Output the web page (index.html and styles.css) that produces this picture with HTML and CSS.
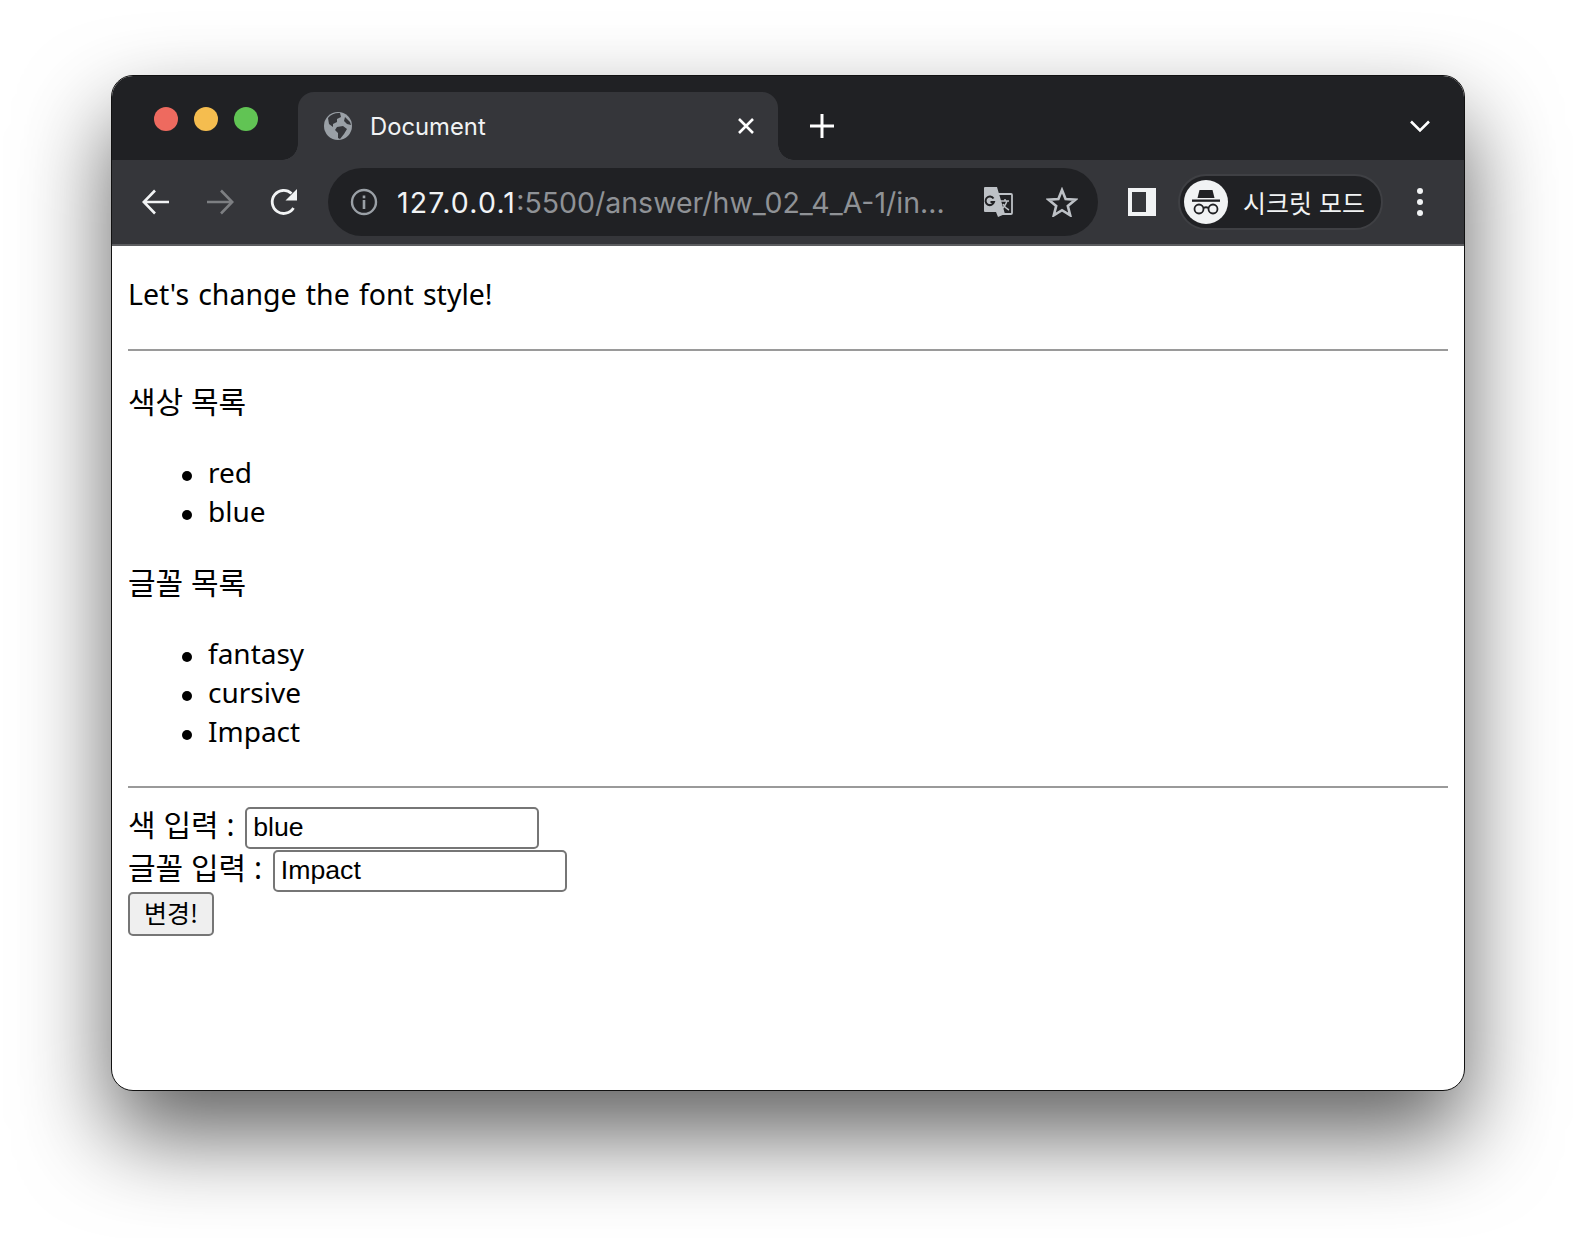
FILE: index.html
```html
<!DOCTYPE html>
<html lang="ko">
  <head>
    <meta charset="utf-8" />
    <title>Document</title>
    <link rel="stylesheet" href="styles.css">
  </head>
  <body>
    <div class="window">
      <div class="tabstrip">
        <div class="lights">
          <span class="light red"></span>
          <span class="light yellow"></span>
          <span class="light green"></span>
        </div>
        <div class="tab">
          <svg class="globe" width="30" height="30" viewBox="0 0 30 30">
            <circle cx="15" cy="15" r="14" fill="#9aa0a6" />
            <path d="M5 7 C8 3 13 1.500 17 2 L18 6 L14 8 L14 11 L10 13 L10 16 L6 13 Z" fill="#35363a" />
            <path d="M14 16 L20 15 L24 18 L21 23 L17 28 L15 27 L15 22 L12 19 Z" fill="#35363a" />
            <path d="M22 6 L27 11 L28 14 L24 13 L21 10 Z" fill="#35363a" />
          </svg>
          <span class="tab-title">Document</span>
          <svg class="tab-close" width="20" height="20" viewBox="0 0 20 20">
            <path d="M3 3 L17 17 M17 3 L3 17" stroke="#fff" stroke-width="2.600" />
          </svg>
        </div>
        <svg class="new-tab" width="26" height="26" viewBox="0 0 26 26">
          <path d="M13 1 V25 M1 13 H25" stroke="#fff" stroke-width="3" />
        </svg>
        <svg class="tab-search" width="22" height="14" viewBox="0 0 22 14">
          <path d="M2 2.500 L11 11.500 L20 2.500" fill="none" stroke="#fff" stroke-width="2.600" />
        </svg>
      </div>
      <div class="toolbar">
        <svg class="nav back" width="28" height="28" viewBox="0 0 28 28">
          <path d="M27 14 H2 M13 2.500 L1.800 14 L13 25.500" fill="none" stroke="#f1f3f4" stroke-width="2.600" />
        </svg>
        <svg class="nav forward" width="28" height="28" viewBox="0 0 28 28">
          <path d="M1 14 H26 M15 2.500 L26.200 14 L15 25.500" fill="none" stroke="#7d7f82" stroke-width="2.600" />
        </svg>
        <svg class="nav reload" width="28" height="28" viewBox="0 0 28 28">
          <path d="M23.500 20 A11.500 11.500 0 1 1 21.500 5.500" fill="none" stroke="#f1f3f4" stroke-width="2.800" />
          <path d="M27 1 V12.500 H15.500 Z" fill="#f1f3f4" />
        </svg>
        <div class="omnibox">
          <svg class="info" width="28" height="28" viewBox="0 0 28 28">
            <circle cx="14" cy="14" r="12" fill="none" stroke="#9aa0a6" stroke-width="2.400" />
            <rect x="12.700" y="12" width="2.600" height="9" fill="#9aa0a6" />
            <rect x="12.700" y="7.500" width="2.600" height="2.800" fill="#9aa0a6" />
          </svg>
          <span class="url"><span class="host">127.0.0.1</span>:5500/answer/hw_02_4_A-1/in...</span>
          <svg class="translate" width="30" height="32" viewBox="0 0 30 32">
            <path d="M1 2 Q1 1 2 1 H14 L22 28 L15 31 L13 26 H2 Q1 26 1 25 Z" fill="#bdc1c6" />
            <path d="M13 8 H28 Q29 8 29 9 V27 Q29 28 28 28 H17 Z" fill="none" stroke="#bdc1c6" stroke-width="1.800" />
            <path d="M10.500 12.500 A4.300 4.300 0 1 0 11 16 H7.500" fill="none" stroke="#202124" stroke-width="2" />
            <path d="M18 15 H26 M22 13 V15 M24 15 Q22 21 17.500 24 M20 18 Q22 22 26 24" fill="none" stroke="#bdc1c6" stroke-width="1.500" />
          </svg>
          <svg class="star" width="32" height="30" viewBox="0 0 32 30">
            <path d="M16 3 L19.600 12 L29.300 12.700 L21.800 18.900 L24.200 28.300 L16 23.200 L7.800 28.300 L10.200 18.900 L2.700 12.700 L12.400 12 Z" fill="none" stroke="#bdc1c6" stroke-width="2.600" />
          </svg>
        </div>
        <svg class="side-panel" width="28" height="28" viewBox="0 0 28 28">
          <path d="M0 0 H28 V28 H0 Z M4 4 V24 H18 V4 Z" fill="#f1f3f4" fill-rule="evenodd" />
        </svg>
        <div class="profile">
          <svg class="avatar" width="44" height="44" viewBox="0 0 44 44">
            <circle cx="22" cy="22" r="22" fill="#f1f3f4" />
            <path d="M15.500 10 H28.500 L30.500 18 H13.500 Z" fill="#202124" />
            <rect x="8" y="19.500" width="28" height="2.300" fill="#202124" />
            <circle cx="15" cy="29" r="4.500" fill="none" stroke="#202124" stroke-width="1.800" />
            <circle cx="29" cy="29" r="4.500" fill="none" stroke="#202124" stroke-width="1.800" />
            <path d="M19.500 28 Q22 26.500 24.500 28" fill="none" stroke="#202124" stroke-width="1.800" />
          </svg>
          <span class="profile-name">시크릿 모드</span>
        </div>
        <div class="menu-dots">
          <span></span>
          <span></span>
          <span></span>
        </div>
      </div>
      <div class="page">
        <p class="intro">Let's change the font style!</p>
        <hr />
        <p>색상 목록</p>
        <ul class="latin">
          <li>red</li>
          <li>blue</li>
        </ul>
        <p>글꼴 목록</p>
        <ul class="latin">
          <li>fantasy</li>
          <li>cursive</li>
          <li>Impact</li>
        </ul>
        <hr />
        <form>
          <label>색 입력 : <input type="text" value="blue" /></label>
          <label>글꼴 입력 : <input type="text" value="Impact" /></label>
          <button type="button">변경!</button>
        </form>
      </div>
    </div>
  </body>
</html>
```

FILE: styles.css
```css
html,
body {
  margin: 0;
  padding: 0;
  background-color: #fff;
}
body {
  width: 1576px;
  height: 1238px;
  overflow: hidden;
  padding: 75px 0 0 111px;
  box-sizing: border-box;
}
.window {
  width: 1354px;
  height: 1016px;
  box-sizing: border-box;
  border-radius: 22px;
  background-color: #fff;
  border: 1.500px solid #111;
  box-shadow: 0 44px 90px rgba(0, 0, 0, 0.62);
  overflow: hidden;
  display: flex;
  flex-direction: column;
}

/* tab strip */
.tabstrip {
  height: 84px;
  flex-shrink: 0;
  background-color: #202124;
  display: flex;
  align-items: flex-end;
}
.lights {
  width: 186px;
  height: 68px;
  padding-left: 42px;
  box-sizing: border-box;
  display: flex;
  gap: 16px;
  padding-top: 15px;
}
.light {
  width: 24px;
  height: 24px;
  border-radius: 50%;
}
.red {
  background-color: #ee6a5f;
}
.yellow {
  background-color: #f5bd4f;
}
.green {
  background-color: #61c454;
}
.tab {
  position: relative;
  width: 480px;
  height: 68px;
  background-color: #35363a;
  border-radius: 16px 16px 0 0;
  display: flex;
  align-items: center;
  padding: 0 22px 0 25px;
  box-sizing: border-box;
}
.tab::before,
.tab::after {
  content: "";
  position: absolute;
  bottom: 0;
  width: 16px;
  height: 16px;
}
.tab::before {
  left: -16px;
  background: radial-gradient(circle at 0 0, #202124 15.500px, #35363a 16px);
}
.tab::after {
  right: -16px;
  background: radial-gradient(circle at 100% 0, #202124 15.500px, #35363a 16px);
}
.globe {
  flex-shrink: 0;
}
.tab-title {
  margin-left: 17px;
  flex-grow: 1;
  font-family: Inter, "Liberation Sans", sans-serif;
  font-size: 23.800px;
  color: #f1f3f4;
}
.new-tab {
  margin: 0 0 21px 31px;
}
.tab-search {
  margin: 0 33px 27px auto;
}

/* toolbar */
.toolbar {
  height: 86px;
  flex-shrink: 0;
  background-color: #35363a;
  border-bottom: 2px solid #5c5d60;
  box-sizing: border-box;
  display: flex;
  align-items: center;
}
.nav {
  flex-shrink: 0;
}
.back {
  margin-left: 30px;
}
.forward {
  margin-left: 36px;
}
.reload {
  margin-left: 36px;
}
.omnibox {
  width: 770px;
  height: 68px;
  margin-left: 30px;
  box-sizing: border-box;
  background-color: #202124;
  border-radius: 34px;
  display: flex;
  align-items: center;
  padding: 0 20px 0 22px;
  flex-shrink: 0;
}
.url {
  margin-left: 19px;
  flex-grow: 1;
  font-family: Inter, "Liberation Sans", sans-serif;
  font-size: 28.500px;
  color: #8f9296;
  white-space: nowrap;
}
.host {
  color: #f1f3f4;
  letter-spacing: 1.200px;
}
.star {
  margin-left: 33px;
}
.side-panel {
  margin-left: 30px;
  flex-shrink: 0;
}
.profile {
  width: 205px;
  height: 56px;
  margin-left: 22px;
  box-sizing: border-box;
  background-color: #202124;
  border: 2px solid #3f4044;
  border-radius: 28px;
  display: flex;
  align-items: center;
  padding-left: 4px;
  flex-shrink: 0;
}
.profile-name {
  margin-left: 15px;
  font-family: "Noto Sans CJK KR", sans-serif;
  font-size: 25px;
  color: #f1f3f4;
  white-space: nowrap;
}
.menu-dots {
  margin-left: 34px;
  display: flex;
  flex-direction: column;
  gap: 5px;
}
.menu-dots span {
  width: 6px;
  height: 6px;
  border-radius: 50%;
  background-color: #f1f3f4;
}

/* page content */
.page {
  flex-grow: 1;
  padding: 29px 16px 0;
  font-family: "Noto Sans", "Noto Sans CJK KR", sans-serif;
  font-size: 30px;
  line-height: 39px;
  color: #000;
}
.page p {
  margin: 0;
}
.page .intro {
  font-size: 28.500px;
  word-spacing: 1.700px;
}
.page .latin {
  font-size: 28px;
}
.page hr {
  margin: 35px 0 31px;
  border: 0;
  border-top: 2px solid #9a9a9a;
}
.page ul {
  margin: 32px 0;
  padding-left: 80px;
  list-style: none;
}
.page li {
  position: relative;
}
.page li::before {
  content: "";
  position: absolute;
  left: -26px;
  top: 18px;
  width: 10px;
  height: 10px;
  border-radius: 50%;
  background-color: #000;
}
.page hr + form {
  margin-top: -15px;
}
label {
  display: block;
  height: 43px;
  line-height: 42px;
}
input {
  width: 294px;
  height: 42px;
  margin-left: 3px;
  box-sizing: border-box;
  padding: 2px 6px;
  border: 2px solid #767676;
  border-radius: 5px;
  font-family: "Liberation Sans", sans-serif;
  font-size: 26.670px;
  color: #000;
}
button {
  display: block;
  height: 44px;
  margin-top: 2px;
  padding: 0 14px 5px;
  border: 2px solid #767676;
  border-radius: 5px;
  background-color: #efefef;
  font-family: "Noto Sans CJK KR", sans-serif;
  font-size: 25px;
  line-height: 34px;
  color: #000;
}
```
